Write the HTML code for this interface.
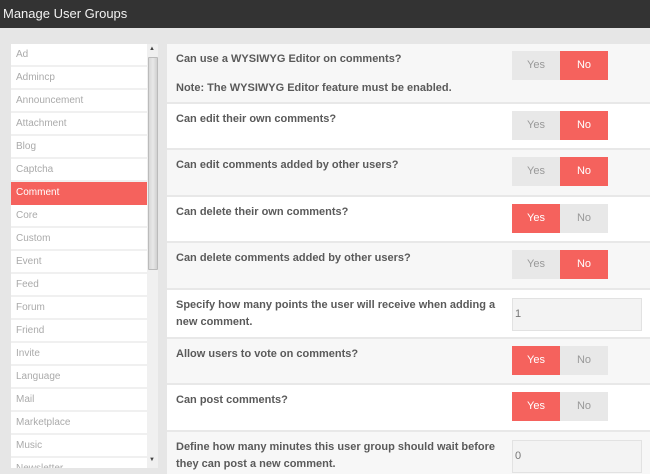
<!DOCTYPE html>
<html><head><meta charset="utf-8"><style>
*{box-sizing:border-box;margin:0;padding:0}
html,body{width:650px;height:474px;overflow:hidden}
body{background:#e6e6e6;font-family:"Liberation Sans",Arial,sans-serif;position:relative}
.hdr{position:absolute;left:0;top:0;width:650px;height:28px;background:#333;color:#f2f2f2;font-size:13px;line-height:27px;padding-left:3px}
.side{position:absolute;left:11px;top:44px;width:136px;height:424px;background:#fff;overflow:hidden}
.side div{height:23px;border-bottom:2px solid #f0f0f0;font-size:10px;color:#aaa;line-height:21px;padding-left:5px}
.side div.act{background:#f5625d;color:#fff;border-bottom-color:#f5625d}
.sb{position:absolute;left:147px;top:44px;width:11px;height:424px;background:#f0f0f0}
.thumb{position:absolute;left:148px;top:57px;width:10px;height:213px;background:linear-gradient(to right,#d8d8d8,#e8e8e8 50%,#d0d0d0);border:1px solid #bbb;border-radius:1px}
.arr{position:absolute;left:149px;font-size:6px;color:#444}
.main{position:absolute;left:167px;top:44px;width:483px;height:430px}
.row{position:absolute;left:0;width:483px;border-bottom:2px solid #e8e8e8;background:#fff}
.row.g{background:#f7f7f7}
.t{position:absolute;left:9px;top:7px;width:330px;font-size:11px;font-weight:bold;color:#5a5a5a;line-height:17px}
.tg{position:absolute;left:345px;top:7px;height:29px;width:96px;font-size:11px}
.tg span{float:left;width:48px;height:29px;line-height:29px;text-align:center;background:#e8e8e8;color:#999}
.tg span.on{background:#f5625d;color:#fff}
.in{position:absolute;left:345px;top:8px;width:130px;height:33px;border:1px solid #e2e2e2;background:#f3f3f3;font-size:11px;color:#777;line-height:31px;padding-left:2px}
</style></head><body>
<div class="hdr">Manage User Groups</div>
<div class="side">
<div>Ad</div><div>Admincp</div><div>Announcement</div><div>Attachment</div><div>Blog</div><div>Captcha</div><div class="act">Comment</div><div>Core</div><div>Custom</div><div>Event</div><div>Feed</div><div>Forum</div><div>Friend</div><div>Invite</div><div>Language</div><div>Mail</div><div>Marketplace</div><div>Music</div><div>Newsletter</div>
</div>
<div class="sb"></div><div class="thumb"></div>
<div class="arr" style="top:46px">▲</div><div class="arr" style="top:457px">▼</div>
<div class="main">
<div class="row g" style="top:0;height:60px"><div class="t">Can use a WYSIWYG Editor on comments?<br><div style="margin-top:12px">Note: The WYSIWYG Editor feature must be enabled.</div></div><div class="tg"><span>Yes</span><span class="on">No</span></div></div>
<div class="row" style="top:60px;height:46px"><div class="t">Can edit their own comments?</div><div class="tg"><span>Yes</span><span class="on">No</span></div></div>
<div class="row g" style="top:106px;height:47px"><div class="t">Can edit comments added by other users?</div><div class="tg"><span>Yes</span><span class="on">No</span></div></div>
<div class="row" style="top:153px;height:46px"><div class="t">Can delete their own comments?</div><div class="tg"><span class="on">Yes</span><span>No</span></div></div>
<div class="row g" style="top:199px;height:47px"><div class="t">Can delete comments added by other users?</div><div class="tg"><span>Yes</span><span class="on">No</span></div></div>
<div class="row" style="top:246px;height:49px"><div class="t">Specify how many points the user will receive when adding a new comment.</div><div class="in">1</div></div>
<div class="row g" style="top:295px;height:46px"><div class="t">Allow users to vote on comments?</div><div class="tg"><span class="on">Yes</span><span>No</span></div></div>
<div class="row" style="top:341px;height:47px"><div class="t">Can post comments?</div><div class="tg"><span class="on">Yes</span><span>No</span></div></div>
<div class="row g" style="top:388px;height:50px"><div class="t">Define how many minutes this user group should wait before they can post a new comment.</div><div class="in">0</div></div>
</div>
</body></html>
